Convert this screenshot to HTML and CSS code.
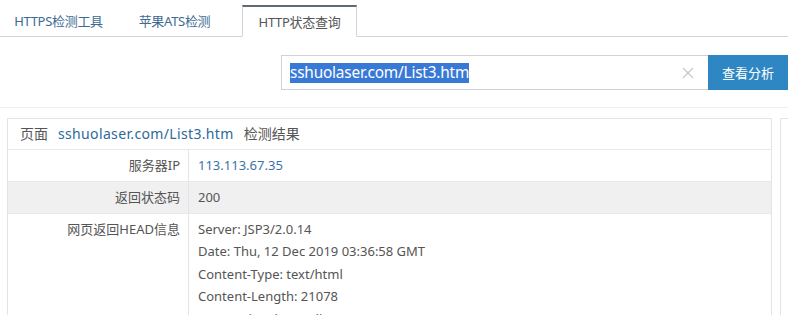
FILE: index.html
```html
<!DOCTYPE html>
<html lang="zh-CN">
<head>
<meta charset="utf-8">
<title>HTTP状态查询</title>
<link rel="stylesheet" href="styles.css">
</head>
<body>
<nav class="tabs">
  <a class="tab tab-a">HTTPS检测工具</a>
  <a class="tab tab-b">苹果ATS检测</a>
  <a class="tab tab-active">HTTP状态查询</a>
</nav>
<div class="search">
  <div class="input">
    <span class="selected">sshuolaser.com/List3.htm</span>
    <span class="clear">
      <svg width="12" height="12" viewBox="0 0 12 12"><path d="M1 1L11 11M11 1L1 11" stroke="#c8c8c8" stroke-width="1.2" fill="none"/></svg>
    </span>
  </div>
  <button class="btn">查看分析</button>
</div>
<main class="content">
  <section class="panel">
    <div class="panel-head"><span>页面</span><a class="link">sshuolaser.com/List3.htm</a><span>检测结果</span></div>
    <div class="row">
      <div class="label">服务器IP</div>
      <div class="value ip">113.113.67.35</div>
    </div>
    <div class="row alt">
      <div class="label">返回状态码</div>
      <div class="value">200</div>
    </div>
    <div class="row multi">
      <div class="label">网页返回HEAD信息</div>
      <div class="value lines">
        <div>Server: JSP3/2.0.14</div>
        <div>Date: Thu, 12 Dec 2019 03:36:58 GMT</div>
        <div>Content-Type: text/html</div>
        <div>Content-Length: 21078</div>
        <div>Connection: keep-alive</div>
      </div>
    </div>
  </section>
  <aside class="side"></aside>
</main>
</body>
</html>
```
FILE: styles.css
```css
html, body {
  margin: 0;
  padding: 0;
  background: #fff;
  overflow: hidden;
}
body {
  font-family: "Noto Sans", "Noto Sans CJK SC", sans-serif;
  font-size: 13px;
  color: #555;
  width: 788px;
  height: 315px;
}
.tabs {
  display: flex;
  align-items: flex-end;
  height: 36px;
  border-bottom: 1px solid #d4d4d4;
}
.tab {
  display: flex;
  align-items: center;
  justify-content: center;
  height: 31px;
  color: #3d6b92;
  text-decoration: none;
  font-size: 13px;
  letter-spacing: -0.3px;
}
.tab-a { width: 117px; }
.tab-b { width: 115px; }
.tab-active {
  width: 113px;
  margin-left: 10px;
  height: 29px;
  margin-bottom: -1px;
  background: #fff;
  color: #555;
  border-top: 2px solid #5f6a75;
  border-left: 1px solid #d4d4d4;
  border-right: 1px solid #d4d4d4;
  border-bottom: 1px solid #fff;
}
.search {
  display: flex;
  justify-content: flex-end;
  margin-top: 18px;
  height: 35px;
}
.input {
  box-sizing: border-box;
  width: 427px;
  height: 35px;
  border: 1px solid #cfd3d6;
  border-right: none;
  display: flex;
  align-items: center;
  padding-left: 8px;
  padding-right: 14px;
}
.selected {
  background: #3979d6;
  color: #fff;
  font-size: 15.4px;
  line-height: 20px;
  letter-spacing: -0.2px;
  flex: none;
}
.clear {
  margin-left: auto;
  display: flex;
}
.btn {
  width: 80px;
  height: 35px;
  border: none;
  background: #2e87c3;
  color: #fff;
  font-family: inherit;
  font-size: 13px;
  padding: 0;
}
.content {
  margin-top: 17px;
  border-top: 1px solid #efefef;
  padding: 10px 0 0 7px;
  display: flex;
  gap: 8px;
}
.panel {
  width: 763px;
  flex: none;
  border: 1px solid #e4e4e4;
  border-bottom: none;
}
.panel-head {
  height: 30px;
  line-height: 30px;
  padding-left: 12px;
  font-size: 14px;
  color: #555;
  border-bottom: 1px solid #e8e8e8;
  display: flex;
  gap: 10px;
}
.link {
  color: #2b6a9b;
  letter-spacing: 0.35px;
}
.row {
  display: flex;
  border-bottom: 1px solid #e8e8e8;
}
.row.alt { background: #f0f0f0; }
.label {
  width: 172px;
  flex: none;
  text-align: right;
  padding: 0 8px 0 0;
  border-right: 1px solid #e4e4e4;
  line-height: 31px;
}
.value {
  padding-left: 9px;
  line-height: 31px;
}
.ip { color: #3a73a6; }
.multi .label, .multi .value {
  padding-top: 4px;
  line-height: 22.4px;
}
.multi .label { padding-bottom: 40px; }
.side {
  flex: 1;
  height: 300px;
  border-left: 1px solid #e4e4e4;
  border-top: 1px solid #e4e4e4;
}
```
